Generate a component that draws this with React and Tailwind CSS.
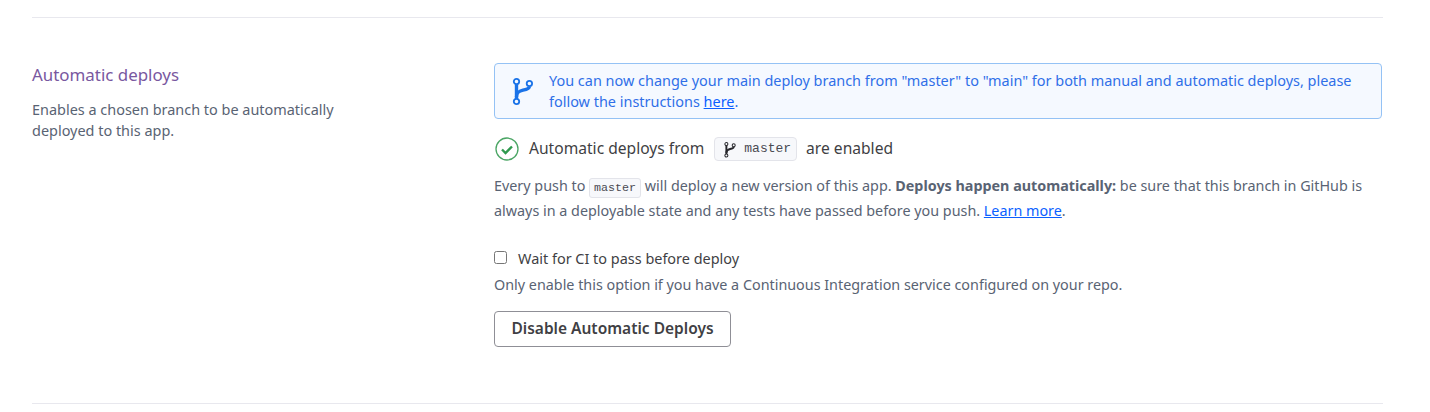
const sans = { fontFamily: '"Noto Sans", sans-serif' };

function BranchIcon({ className }) {
  return (
    <svg viewBox="0 0 22 30" className={className} fill="none" stroke="currentColor">
      <circle cx="5.500" cy="5.500" r="2.700" strokeWidth="1.800" />
      <circle cx="5.500" cy="25.500" r="2.700" strokeWidth="1.800" />
      <circle cx="18.400" cy="7.500" r="2.700" strokeWidth="1.800" />
      <path d="M5.500 8v15" strokeWidth="3.400" />
      <path d="M5.500 21c0-5 3-6 6.500-6.800 4.500-1 6.400-2 6.400-3.700" strokeWidth="3.400" />
    </svg>
  );
}

export default function App() {
  return (
    <div className="h-[412px] w-[1430px] overflow-hidden bg-white px-[32px] pt-[17px] text-[14.35px] text-[#596373]" style={sans}>
      <div className="w-[1351px] border-t border-[#e8e8ee]" />
      <div className="flex h-[386px] w-[1351px] border-b border-[#e8e8ee] pt-[45px]">
        <div className="w-[462px] shrink-0">
          <h3 className="text-[16.900px] leading-[24px] font-normal text-[#79589f]">Automatic deploys</h3>
          <p className="mt-[12px] w-[320px] text-[14.45px] leading-[21px]">Enables a chosen branch to be automatically deployed to this app.</p>
        </div>
        <div className="flex-1">
          <div className="flex h-[56px] w-[888px] items-center rounded-[4px] border border-[#94c2f5] bg-[#f5f9ff] pl-[16px] pr-[20px] text-[14.45px] text-[#2f6fe8]">
            <BranchIcon className="h-[30px] w-[22px] shrink-0 text-[#1a73e8]" />
            <p className="ml-[16px] leading-[21px]">
              You can now change your main deploy branch from "master" to "main" for both manual and automatic deploys, please follow the instructions <a className="underline text-[#0b5fff]">here</a>.
            </p>
          </div>
          <div className="mt-[17px] flex h-[26px] items-center text-[15.600px] text-[#3f3f44]">
            <svg viewBox="0 0 24 24" className="ml-[1px] h-[24px] w-[24px]" fill="none">
              <circle cx="12" cy="12" r="11" stroke="#4aa564" strokeWidth="1.300" />
              <path d="M7 12.500l3.500 3.500 6.500-6.500" stroke="#2f9a4f" strokeWidth="2.400" />
            </svg>
            <span className="ml-[10px]">Automatic deploys from</span>
            <span className="ml-[10px] flex h-[24px] items-center rounded-[4px] border border-[#e3e4ea] bg-[#f7f8fb] pl-[8px] pr-[5px]">
              <BranchIcon className="h-[17px] w-[13px] text-[#26262b]" />
              <code className="ml-[8px] text-[13px] text-[#4a4a52] font-['Liberation_Mono',monospace]">master</code>
            </span>
            <span className="ml-[9px]">are enabled</span>
          </div>
          <p className="mt-[11px] leading-[25px]">
            Every push to <code className="rounded-[3px] border border-[#e3e4ea] bg-[#f7f8fb] px-[4px] py-[2px] text-[11.670px] leading-none text-[#4a4a52] font-['Liberation_Mono',monospace]">master</code> will deploy a new version of this app. <b className="font-bold">Deploys happen automatically:</b> be sure that this branch in GitHub is always in a deployable state and any tests have passed before you push. <a className="underline text-[#0b5fff]">Learn more</a>.
          </p>
          <label className="mt-[24px] flex items-center text-[14.45px] text-[#3f3f44]">
            <input type="checkbox" className="mb-[4px] h-[13px] w-[13px]" />
            <span className="ml-[11px] leading-[24px]">Wait for CI to pass before deploy</span>
          </label>
          <p className="mt-[2px] leading-[24px]">Only enable this option if you have a Continuous Integration service configured on your repo.</p>
          <button className="mt-[14px] h-[36px] w-[237px] rounded-[4px] border border-[#8f8f96] bg-white text-[15.500px] font-semibold text-[#3f3f44]">Disable Automatic Deploys</button>
        </div>
      </div>
    </div>
  );
}
